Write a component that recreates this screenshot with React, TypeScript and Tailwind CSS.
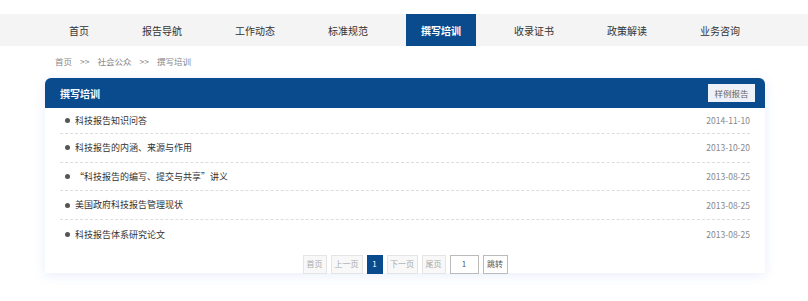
import React from 'react'

const navItems = ['首页', '报告导航', '工作动态', '标准规范', '撰写培训', '收录证书', '政策解读', '业务咨询']

const articles = [
  { title: '科技报告知识问答', date: '2014-11-10' },
  { title: '科技报告的内涵、来源与作用', date: '2013-10-20' },
  { title: '“科技报告的编写、提交与共享”讲义', date: '2013-08-25' },
  { title: '美国政府科技报告管理现状', date: '2013-08-25' },
  { title: '科技报告体系研究论文', date: '2013-08-25' },
]

export default function App() {
  return (
    <div
      className="w-[808px] h-[301px] bg-white overflow-hidden"
      style={{ fontFamily: '"Noto Sans CJK SC", "Noto Sans", sans-serif' }}
    >
      {/* Top navigation */}
      <div className="mt-[14px] h-[32px] bg-[#f4f4f4]">
        <ul className="flex h-full pl-[54px] gap-[23px]">
          {navItems.map(item => {
            const active = item === '撰写培训'
            return (
              <li
                key={item}
                className={`flex items-center h-full px-[15px] text-[10px] ${
                  active ? 'bg-[#0a4b8e] text-white font-bold' : 'text-[#333]'
                }`}
              >
                {item}
              </li>
            )
          })}
        </ul>
      </div>

      {/* Breadcrumb */}
      <div className="flex items-center h-[30px] pl-[55px] text-[8.5px] text-[#888] gap-[8px]">
        <span>首页</span>
        <span>&gt;&gt;</span>
        <span>社会公众</span>
        <span>&gt;&gt;</span>
        <span>撰写培训</span>
      </div>

      {/* Card */}
      <div className="mt-[2px] ml-[45px] w-[720px] bg-white rounded-t-[6px] shadow-[0_2px_12px_rgba(60,110,210,0.12)]">
        <div className="flex items-center justify-between h-[30px] bg-[#0a4b8e] rounded-t-[6px] pl-[15px] pr-[10px]">
          <span className="text-white text-[10px] font-bold">撰写培训</span>
          <span className="flex items-center justify-center w-[47px] h-[18px] bg-[#eef1f8] text-[#666] text-[8.5px]">
            样例报告
          </span>
        </div>

        <ul className="px-[15px]">
          {articles.map((a, i) => (
            <li
              key={i}
              className={`flex items-center justify-between border-b border-dashed border-[#dddddd] ${
                i === 0 ? 'h-[26px]' : 'h-[28.7px]'
              } ${i === articles.length - 1 ? 'border-b-0' : ''}`}
            >
              <div className="flex items-center">
                <span className="ml-[5px] w-[5px] h-[5px] rounded-full bg-[#555]" />
                <span className="ml-[5px] text-[9px] text-[#333]">{a.title}</span>
              </div>
              <span className="text-[8.5px] text-[#888]">{a.date}</span>
            </li>
          ))}
        </ul>

        {/* Pagination */}
        <div className="flex justify-center gap-[4px] pt-[6px] h-[24px] text-[8px]">
          <span className="flex items-center justify-center w-[24px] h-[19px] border border-[#e5e5e5] bg-[#f8f8f8] text-[#aaa]">首页</span>
          <span className="flex items-center justify-center w-[32px] h-[19px] border border-[#e5e5e5] bg-[#f8f8f8] text-[#aaa]">上一页</span>
          <span className="flex items-center justify-center w-[16px] h-[19px] bg-[#0a4b8e] text-white">1</span>
          <span className="flex items-center justify-center w-[31px] h-[19px] border border-[#e5e5e5] bg-[#f8f8f8] text-[#aaa]">下一页</span>
          <span className="flex items-center justify-center w-[24px] h-[19px] border border-[#e5e5e5] bg-[#f8f8f8] text-[#aaa]">尾页</span>
          <span className="flex items-center justify-center w-[29px] h-[19px] border border-[#bbb] bg-white text-[#555]">1</span>
          <span className="flex items-center justify-center w-[25px] h-[19px] border border-[#bbb] bg-white text-[#555]">跳转</span>
        </div>
      </div>
    </div>
  )
}
